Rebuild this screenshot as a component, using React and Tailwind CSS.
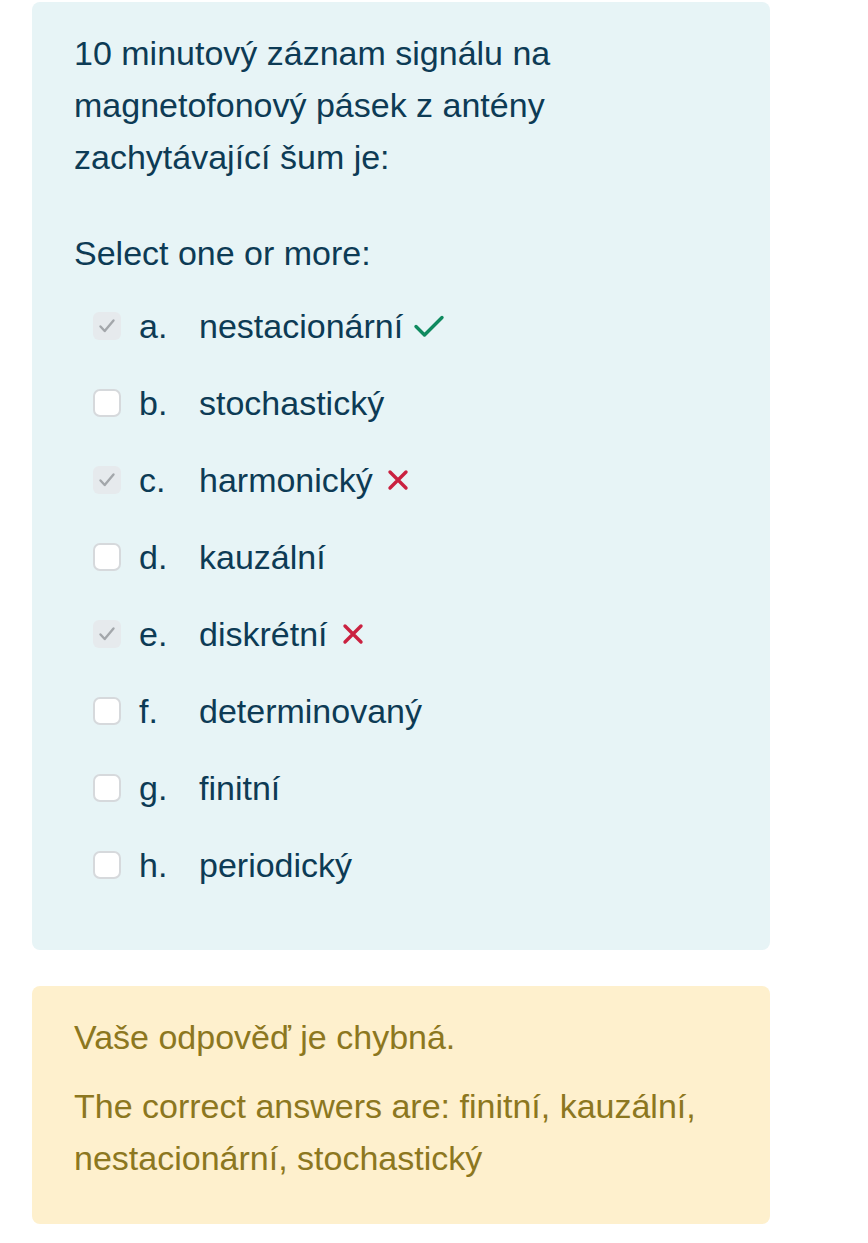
import React from 'react';

const options = [
  { letter: 'a.', text: 'nestacionární', checked: true, mark: 'ok' },
  { letter: 'b.', text: 'stochastický' },
  { letter: 'c.', text: 'harmonický', checked: true, mark: 'bad' },
  { letter: 'd.', text: 'kauzální' },
  { letter: 'e.', text: 'diskrétní', checked: true, mark: 'bad' },
  { letter: 'f.', text: 'determinovaný' },
  { letter: 'g.', text: 'finitní' },
  { letter: 'h.', text: 'periodický' },
];

function Box({ checked }) {
  if (checked) {
    return (
      <span className="w-[28px] h-[28px] rounded-[6px] bg-[#e6eaed] flex items-center justify-center shrink-0">
        <svg width="20" height="20" viewBox="0 0 20 20" fill="none">
          <path d="M3.5 10.5l4.2 4.5L16.5 4.5" stroke="#a3a7ab" strokeWidth="2.4" strokeLinecap="round" strokeLinejoin="round" />
        </svg>
      </span>
    );
  }
  return <span className="w-[28px] h-[28px] rounded-[7px] bg-white border-2 border-[#d6d9dc] shrink-0" />;
}

function Mark({ type }) {
  if (type === 'ok') {
    return (
      <svg className="ml-[10px]" width="32" height="28" viewBox="0 0 32 28" fill="none">
        <path d="M3 14.5l8.5 8.5L29 5.5" stroke="#0f8a5f" strokeWidth="3.4" strokeLinecap="round" strokeLinejoin="round" />
      </svg>
    );
  }
  return (
    <svg className="ml-[14px]" width="22" height="22" viewBox="0 0 22 22" fill="none">
      <path d="M3 3l16 16M19 3L3 19" stroke="#ca2140" strokeWidth="3.4" strokeLinecap="round" />
    </svg>
  );
}

export default function App() {
  return (
    <div className="bg-white min-h-[1243px] pt-[2px] pl-[32px]" style={{ fontFamily: '"Liberation Sans", Arial, sans-serif' }}>
      <div className="w-[738px] bg-[#e7f4f6] rounded-[8px] pl-[42px] pr-[30px] pt-[25px] pb-[47px] text-[#0d3b55] text-[34px] leading-[52px]">
        <p>10 minutový záznam signálu na<br />magnetofonový pásek z antény<br />zachytávající šum je:</p>
        <p className="mt-[44px]">Select one or more:</p>
        <div className="mt-[8px] flex flex-col">
          {options.map((o) => (
            <div key={o.letter} className="h-[77px] flex items-center pl-[19px]">
              <Box checked={o.checked} />
              <span className="ml-[18px] w-[60px]">{o.letter}</span>
              <span>{o.text}</span>
              {o.mark && <Mark type={o.mark} />}
            </div>
          ))}
        </div>
      </div>
      <div className="mt-[36px] w-[738px] bg-[#fef0cd] rounded-[8px] pl-[42px] pr-[30px] pt-[25px] pb-[40px] text-[#8c7720] text-[34px] leading-[52px]">
        <p>Vaše odpověď je chybná.</p>
        <p className="mt-[17px]">The correct answers are: finitní, kauzální,<br />nestacionární, stochastický</p>
      </div>
    </div>
  );
}
